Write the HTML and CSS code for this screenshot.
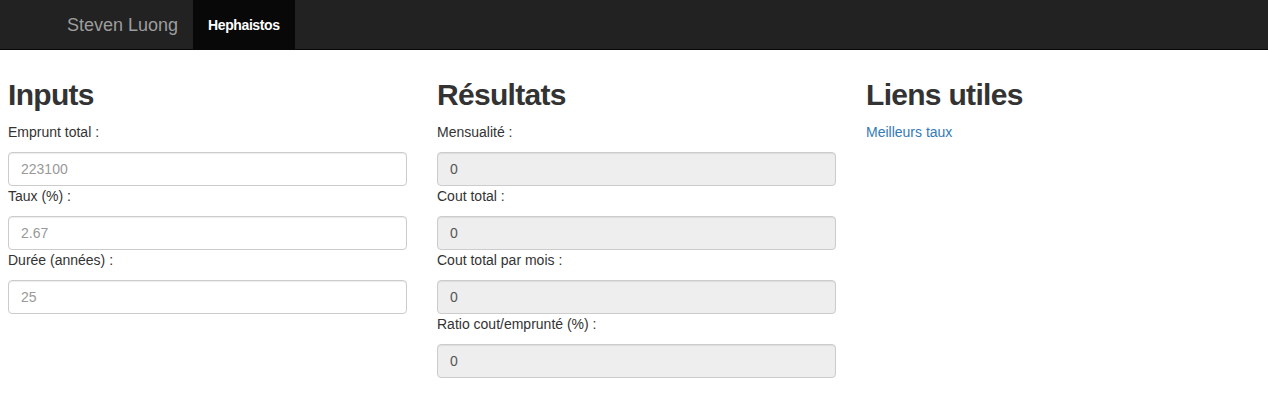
FILE: index.html
```html
<!DOCTYPE html>
<html lang="fr">
<head>
<meta charset="utf-8">
<title>Hephaistos</title>
<link rel="stylesheet" href="styles.css">
</head>
<body>
<nav class="navbar">
  <a class="brand" href="#">Steven Luong</a>
  <ul class="nav">
    <li class="nav-item active"><a href="#">Hephaistos</a></li>
  </ul>
</nav>
<main class="content">
  <section class="col">
    <h2 class="title">Inputs</h2>
    <label class="field-label" for="emprunt">Emprunt total :</label>
    <input class="field" id="emprunt" type="text" placeholder="223100">
    <label class="field-label" for="taux">Taux (%) :</label>
    <input class="field" id="taux" type="text" placeholder="2.67">
    <label class="field-label" for="duree">Durée (années) :</label>
    <input class="field" id="duree" type="text" placeholder="25">
  </section>
  <section class="col">
    <h2 class="title">Résultats</h2>
    <label class="field-label" for="mens">Mensualité :</label>
    <input class="field readonly" id="mens" type="text" value="0" readonly>
    <label class="field-label" for="cout">Cout total :</label>
    <input class="field readonly" id="cout" type="text" value="0" readonly>
    <label class="field-label" for="coutmois">Cout total par mois :</label>
    <input class="field readonly" id="coutmois" type="text" value="0" readonly>
    <label class="field-label" for="ratio">Ratio cout/emprunté (%) :</label>
    <input class="field readonly" id="ratio" type="text" value="0" readonly>
  </section>
  <section class="col">
    <h2 class="title">Liens utiles</h2>
    <a class="link" href="#">Meilleurs taux</a>
  </section>
</main>
</body>
</html>
```

FILE: styles.css
```css
* { box-sizing: border-box; }

body {
  margin: 0;
  font-family: "Liberation Sans", Arial, Helvetica, sans-serif;
  font-size: 14px;
  line-height: 20px;
  color: #333;
  background: #fff;
}

.navbar {
  display: flex;
  align-items: stretch;
  height: 50px;
  background: #222;
  border-bottom: 1px solid #080808;
  padding-left: 52px;
}

.brand {
  display: flex;
  align-items: center;
  padding: 0 15px;
  font-size: 18px;
  line-height: 20px;
  color: #9d9d9d;
  text-decoration: none;
}

.nav {
  display: flex;
  margin: 0;
  padding: 0;
  list-style: none;
}

.nav-item a {
  display: flex;
  align-items: center;
  height: 100%;
  padding: 0 15px;
  color: #9d9d9d;
  text-decoration: none;
}

.nav-item.active a {
  background: #080808;
  color: #fff;
  font-weight: bold;
  letter-spacing: -0.4px;
}

.content {
  display: grid;
  grid-template-columns: repeat(3, 399px);
  column-gap: 30px;
  padding: 28px 8px 0;
}

.col {
  display: flex;
  flex-direction: column;
  align-items: flex-start;
}

.title {
  margin: 0 0 11px;
  font-size: 30px;
  line-height: 33px;
  font-weight: bold;
  letter-spacing: -0.7px;
  color: #333;
}

.field-label {
  display: block;
  margin-bottom: 10px;
  line-height: 20px;
}

.field {
  display: block;
  width: 100%;
  height: 34px;
  padding: 6px 12px;
  font-family: inherit;
  font-size: 14px;
  line-height: 20px;
  color: #555;
  background: #fff;
  border: 1px solid #ccc;
  border-radius: 4px;
  box-shadow: inset 0 1px 1px rgba(0, 0, 0, 0.075);
  outline: none;
}

.field::placeholder { color: #999; opacity: 1; }

.field.readonly { background: #eee; }

.link {
  color: #337ab7;
  text-decoration: none;
  line-height: 20px;
}
```
